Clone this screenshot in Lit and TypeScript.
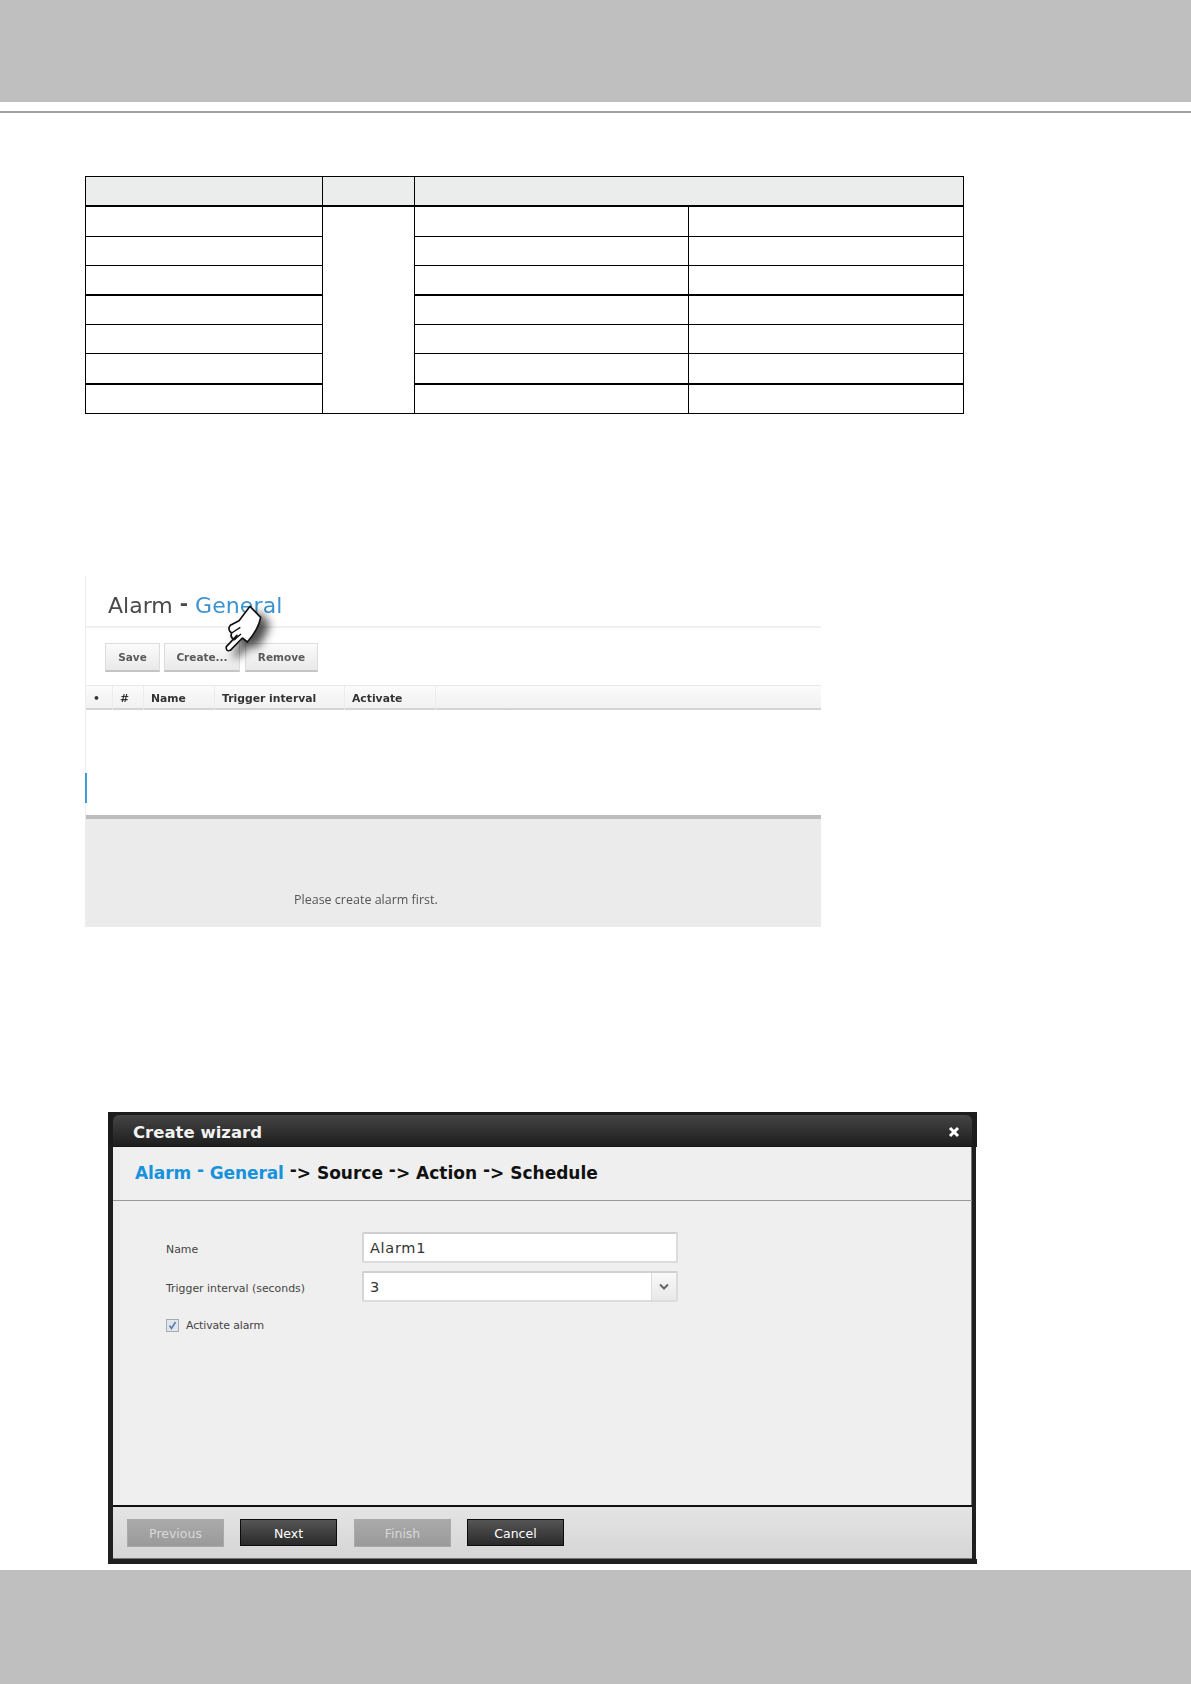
import { LitElement, html, css } from "lit";
import { customElement } from "lit/decorators.js";

@customElement("app-root")
export class AppRoot extends LitElement {
  static styles = css`
    :host {
      display: block;
      width: 1191px;
      height: 1684px;
      background: #fff;
      overflow: hidden;
      font-family: "DejaVu Sans", sans-serif;
    }
    .band { background: #bebfbe; }
    .band.top { height: 102px; }
    .band.bottom { height: 114px; margin-top: 6px; }
    .rule { height: 2px; margin-top: 9px; background: #a0a0a0; }

    table.spec {
      margin: 63px 0 0 85px;
      width: 878px;
      height: 238px;
      border-collapse: collapse;
      table-layout: fixed;
    }
    .spec td { border: 1px solid #000; padding: 0; height: 20px; }
    .spec .head td { background: #ebedec; border-bottom: 2px solid #000; }
    .spec .thick td.row { border-bottom: 2px solid #000; }
    .spec .c1 { width: 237px; }
    .spec .c2 { width: 92px; }
    .spec .c3 { width: 274px; }
    .spec .c4 { width: 275px; }

    .alarm {
      margin: 162px 0 0 85px;
      width: 736px;
      height: 351px;
      box-sizing: border-box;
      border-left: 1px solid #eee;
      position: relative;
      filter: blur(0.45px);
      display: flex;
      flex-direction: column;
    }
    .alarm-title {
      height: 52px;
      box-sizing: border-box;
      border-bottom: 2px solid #f0f0f0;
      padding: 16px 0 0 22px;
      font-size: 22px;
      line-height: 28px;
      color: #4a4a4a;
      white-space: nowrap;
    }
    .alarm-title .raise { vertical-align: 3px; line-height: 1; font-weight: bold; font-size: 20px; }
    .alarm-title .blue { color: #3b93cf; letter-spacing: 0.1px; }
    .toolbar {
      height: 57px;
      box-sizing: border-box;
      padding: 15px 0 0 19px;
      display: flex;
      align-items: flex-start;
    }
    .tbtn {
      height: 29px;
      box-sizing: border-box;
      border: 1px solid #dcdcdc;
      border-bottom: 2px solid #c4c4c4;
      background: linear-gradient(#fbfbfb, #e9e9e9);
      font-size: 10.5px;
      font-weight: 600;
      color: #5a5a5a;
      display: flex;
      align-items: center;
      justify-content: center;
    }
    .tbtn.save { width: 55px; margin-right: 4px; }
    .tbtn.create { width: 76px; margin-right: 5px; }
    .tbtn.remove { width: 73px; }
    .lhead {
      height: 25px;
      box-sizing: border-box;
      display: grid;
      grid-template-columns: 27px 31px 71px 130px 91px 1fr;
      background: linear-gradient(#fbfbfb, #f1f1f1);
      border-top: 1px solid #e8e8e8;
      border-bottom: 2px solid #d4d4d4;
      font-size: 10.8px;
      font-weight: bold;
      color: #333;
      line-height: 26px;
    }
    .lhead span { padding-left: 7px; border-right: 1px solid #ececec; white-space: nowrap; }
    .lhead span:last-child { border-right: 0; }
    .lbody { height: 105px; box-sizing: border-box; padding-top: 63px; background: #fff; }
    .mark { width: 2px; height: 30px; margin-left: -1px; background: #3f9bd6; }
    .thickline { height: 4px; background: #bdbdbd; }
    .lower {
      height: 108px;
      box-sizing: border-box;
      background: #ebebeb;
      padding: 73px 0 0 208px;
      font-family: "Open Sans", sans-serif;
      font-size: 12.5px;
      line-height: 16px;
      color: #555;
    }
    .hand {
      position: absolute;
      left: 129px;
      top: 22px;
      width: 60px;
      height: 62px;
      filter: drop-shadow(8px 6px 5px rgba(0, 0, 0, 0.7));
    }

    .wizard { margin: 185px 0 0 108px; width: 869px; height: 452px; display: flex; flex-direction: column; }
    .w-head { background: #1c1c1c; padding: 3px 5px 0 5px; }
    .w-title {
      height: 32px;
      box-sizing: border-box;
      border-radius: 6px 6px 0 0;
      background: linear-gradient(#444, #1e1e1e);
      border-bottom: 1px solid #151515;
      padding: 3px 12px 0 20px;
      display: flex;
      align-items: center;
      justify-content: space-between;
      color: #f2f2f2;
      font-size: 16.5px;
      font-weight: bold;
    }
    .w-title svg { width: 12px; height: 12px; }
    .w-main {
      flex: 1;
      margin-right: 1px;
      border-left: 5px solid #1f1f1f;
      border-right: 4px solid #1f1f1f;
      background: #efefef;
      display: flex;
      flex-direction: column;
      box-shadow: inset -1px 0 #777;
    }
    .crumbs {
      height: 54px;
      box-sizing: border-box;
      border-bottom: 1px solid #999;
      padding: 15px 0 0 22px;
      line-height: 22px;
      font-size: 17px;
      font-weight: bold;
      color: #111;
      white-space: pre;
    }
    .crumbs .blue { color: #1792dc; letter-spacing: -0.1px; }
    .crumbs .raise { vertical-align: 3px; line-height: 1; }
    .form { flex: 1; padding: 31px 0 0 53px; font-size: 10.9px; color: #444; }
    .frow { display: flex; align-items: center; height: 31px; margin-bottom: 8px; }
    .frow label { width: 196px; padding-top: 4px; }
    .field {
      width: 316px;
      height: 31px;
      box-sizing: border-box;
      background: #fff;
      border: 2px solid #d6d6d6;
      border-color: #cfcfcf #dcdcdc #dcdcdc #d6d6d6;
      border-radius: 2px;
      font-size: 14.5px;
      letter-spacing: 0.7px;
      color: #333;
      padding-left: 6px;
      display: flex;
      align-items: center;
    }
    .field.select { justify-content: space-between; }
    .chev {
      width: 24px;
      height: 100%;
      border-left: 1px solid #ddd;
      background: linear-gradient(#f9f9f9, #e8e8e8);
      display: flex;
      align-items: center;
      justify-content: center;
    }
    .chev svg { width: 10px; height: 7px; }
    .check { display: flex; align-items: center; gap: 7px; margin-top: 17px; letter-spacing: -0.1px; }
    .check svg { width: 13px; height: 13px; }
    .footer {
      height: 54px;
      box-sizing: border-box;
      border-top: 2px solid #111;
      background: linear-gradient(#e4e4e4, #d5d5d5);
      box-shadow: inset 0 -1px #777;
      padding: 12px 0 0 14px;
      display: flex;
      align-items: flex-start;
      gap: 16px;
    }
    .wbtn {
      width: 97px;
      box-sizing: border-box;
      padding-top: 1px;
      display: flex;
      align-items: center;
      justify-content: center;
      font-size: 12.5px;
    }
    .wbtn.off {
      height: 28px;
      border: 1px solid #aaa;
      background: linear-gradient(#aaa, #9a9a9a);
      color: #d8d8d8;
    }
    .wbtn.on {
      height: 27px;
      border: 1px solid #0c0c0c;
      background: linear-gradient(#555, #2a2a2a);
      color: #fff;
    }
    .wbtn.nudge { margin-left: 1px; }
    .w-tail { height: 5px; background: #1f1f1f; }
  `;

  render() {
    const rows = [0, 1, 2, 3, 4, 5, 6];
    return html`
      <div class="band top"></div>
      <div class="rule"></div>

      <table class="spec">
        <colgroup>
          <col class="c1" /><col class="c2" /><col class="c3" /><col class="c4" />
        </colgroup>
        <tr class="head"><td></td><td></td><td colspan="2"></td></tr>
        ${rows.map(
          (r) => html`<tr class=${r === 2 || r === 5 ? "thick" : ""}>
            <td class="row"></td>
            ${r === 0 ? html`<td rowspan="7"></td>` : ""}
            <td class="row"></td>
            <td class="row"></td>
          </tr>`
        )}
      </table>

      <section class="alarm">
        <div class="alarm-title">Alarm <span class="raise">-</span> <span class="blue">General</span></div>
        <div class="toolbar">
          <div class="tbtn save">Save</div>
          <div class="tbtn create">Create...</div>
          <div class="tbtn remove">Remove</div>
        </div>
        <div class="lhead">
          <span>•</span><span>#</span><span>Name</span><span>Trigger interval</span><span>Activate</span><span></span>
        </div>
        <div class="lbody"><div class="mark"></div></div>
        <div class="thickline"></div>
        <div class="lower">Please create alarm first.</div>
        <svg class="hand" viewBox="0 0 180 186" preserveAspectRatio="none">
          <path
            d="M105 25 L137 58 Q130 95 97 132 L82 120 L46 157 Q32 162 34 146 L66 112 L58 125 Q44 118 50 105 Q36 95 46 82 L72 68 Z"
            fill="#fff"
            stroke="#111"
            stroke-width="5"
            stroke-linejoin="round"
          />
          <path d="M50 105 L76 88 M58 125 L78 108" fill="none" stroke="#111" stroke-width="4" />
        </svg>
      </section>

      <section class="wizard">
        <div class="w-head">
          <div class="w-title">
            <span>Create wizard</span>
            <svg viewBox="0 0 12 12"><path d="M2 2 L10 10 M10 2 L2 10" stroke="#fff" stroke-width="3" /></svg>
          </div>
        </div>
        <div class="w-main">
          <div class="crumbs"><span class="blue">Alarm <span class="raise">-</span> General</span> <span class="raise">-</span>&gt; Source <span class="raise">-</span>&gt; Action <span class="raise">-</span>&gt; Schedule</div>
          <div class="form">
            <div class="frow"><label>Name</label><div class="field">Alarm1</div></div>
            <div class="frow">
              <label>Trigger interval (seconds)</label>
              <div class="field select">
                <span>3</span>
                <span class="chev"><svg viewBox="0 0 10 7"><path d="M1 1.5 L5 5.5 L9 1.5" fill="none" stroke="#666" stroke-width="2" /></svg></span>
              </div>
            </div>
            <div class="check">
              <svg viewBox="0 0 13 13">
                <rect x="0.5" y="0.5" width="12" height="12" fill="#dfe6f0" stroke="#aaa" />
                <path d="M3.5 6.5 L5.5 9.5 L9.5 3" fill="none" stroke="#5a78a8" stroke-width="1.5" />
              </svg>
              <span>Activate alarm</span>
            </div>
          </div>
          <div class="footer">
            <div class="wbtn off">Previous</div>
            <div class="wbtn on">Next</div>
            <div class="wbtn off nudge">Finish</div>
            <div class="wbtn on">Cancel</div>
          </div>
        </div>
        <div class="w-tail"></div>
      </section>

      <div class="band bottom"></div>
    `;
  }
}
